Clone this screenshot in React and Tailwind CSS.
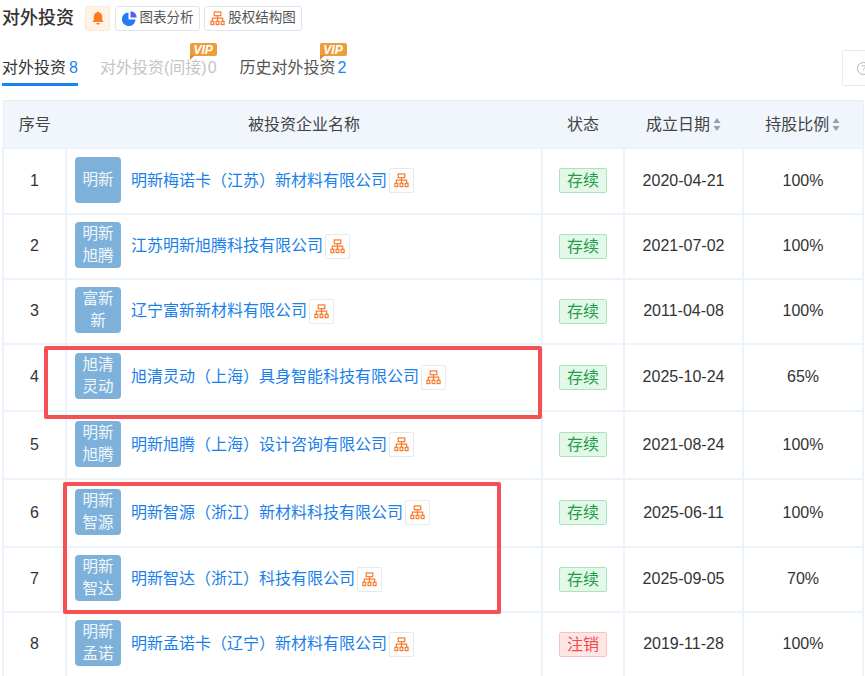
import React from 'react'

const rows = [
  { id: 1, logo: ['明新'], name: '明新梅诺卡（江苏）新材料有限公司', status: '存续', date: '2020-04-21', ratio: '100%', h: 'h-[66px]' },
  { id: 2, logo: ['明新', '旭腾'], name: '江苏明新旭腾科技有限公司', status: '存续', date: '2021-07-02', ratio: '100%', h: 'h-[65px]' },
  { id: 3, logo: ['富新', '新'], name: '辽宁富新新材料有限公司', status: '存续', date: '2011-04-08', ratio: '100%', h: 'h-[65px]' },
  { id: 4, logo: ['旭清', '灵动'], name: '旭清灵动（上海）具身智能科技有限公司', status: '存续', date: '2025-10-24', ratio: '65%', h: 'h-[67px]' },
  { id: 5, logo: ['明新', '旭腾'], name: '明新旭腾（上海）设计咨询有限公司', status: '存续', date: '2021-08-24', ratio: '100%', h: 'h-[68px]' },
  { id: 6, logo: ['明新', '智源'], name: '明新智源（浙江）新材料科技有限公司', status: '存续', date: '2025-06-11', ratio: '100%', h: 'h-[68px]' },
  { id: 7, logo: ['明新', '智达'], name: '明新智达（浙江）科技有限公司', status: '存续', date: '2025-09-05', ratio: '70%', h: 'h-[65px]' },
  { id: 8, logo: ['明新', '孟诺'], name: '明新孟诺卡（辽宁）新材料有限公司', status: '注销', date: '2019-11-28', ratio: '100%', h: 'h-[65px]' },
]

function TreeIcon({ className }) {
  return (
    <svg className={className} viewBox="0 0 16 16" fill="none" stroke="#f97b2f" strokeWidth="1.3">
      <rect x="4.500" y="1" width="7" height="4" />
      <path d="M8 5v2.500M2.500 11V7.500h11V11M8 7.500V11" />
      <rect x="1" y="11" width="3" height="3.500" />
      <rect x="6.500" y="11" width="3" height="3.500" />
      <rect x="12" y="11" width="3" height="3.500" />
    </svg>
  )
}

function SortIcon() {
  return (
    <svg className="ml-[3px] inline-block h-[13px] w-[8px] align-[-1px]" viewBox="0 0 8 13" fill="#9aa0a8">
      <path d="M4 0l3.500 5h-7zM4 13L.5 8h7z" />
    </svg>
  )
}

function VipTag({ className }) {
  return (
    <span className={`absolute flex h-[13px] w-[27px] items-center justify-center rounded-[2px] bg-[#ee9d3c] text-[12px] font-bold italic leading-none text-white ${className}`}>
      VIP
      <span className="absolute bottom-[-4px] left-0 h-0 w-0 border-r-[5px] border-t-[5px] border-r-transparent border-t-[#dd8a2a]"></span>
    </span>
  )
}

function App() {
  return (
    <div
      className="relative h-[676px] w-[865px] overflow-hidden bg-white text-[#333]"
      style={{ fontFamily: '"Liberation Sans", "Noto Sans CJK SC", sans-serif' }}
    >
      <div className="flex h-[36px] items-center pl-[2px]">
        <span className="text-[18px] font-medium leading-none">对外投资</span>
        <span className="ml-[11px] flex h-[25px] w-[25px] items-center justify-center rounded-[3px] border border-[#fde6d2] bg-[#fff3e8]">
          <svg className="h-[14px] w-[14px]" viewBox="0 0 14 14" fill="#ff7a1a">
            <path d="M7 0.500c.7 0 1.100.4 1.200 1C10.200 2 11.200 3.700 11.200 6v3l1.300 2H1.500l1.300-2V6c0-2.300 1-4 3-4.500.1-.6.5-1 1.200-1zM5.200 12h3.600c-.2 1-.9 1.500-1.800 1.500S5.400 13 5.200 12z" />
          </svg>
        </span>
        <span className="ml-[5px] flex h-[25px] w-[85px] items-center justify-center rounded-[3px] border border-[#dfe5ee] text-[13.5px] text-[#555]">
          <svg className="mr-[3px] h-[15px] w-[15px]" viewBox="0 0 15 15" fill="#1f7cf5">
            <path d="M6.500 1.500v7h7a6.800 6.800 0 1 1-7-7z" />
            <path d="M8.500 0.300a6.800 6.800 0 0 1 6.200 6.200H8.500z" fill="#5b5ff0" />
          </svg>
          图表分析
        </span>
        <span className="ml-[4px] flex h-[25px] w-[98px] items-center justify-center rounded-[3px] border border-[#dfe5ee] text-[13.5px] text-[#555]">
          <TreeIcon className="mr-[3px] h-[15px] w-[15px]" />
          股权结构图
        </span>
      </div>

      <div className="relative flex h-[50px] items-start pl-[2px] pt-[19px] text-[16px] leading-[26px]">
        <div className="h-[31px] w-[76px] border-b-[3px] border-[#1784f5] whitespace-nowrap">
          对外投资<span className="ml-[3px] text-[#1784f5]">8</span>
        </div>
        <div className="relative ml-[22px] whitespace-nowrap text-[#c4c4c4]">
          对外投资(间接)<span className="ml-[1px]">0</span>
          <VipTag className="right-[0px] top-[-12px]" />
        </div>
        <div className="relative ml-[23px] whitespace-nowrap text-[#555]">
          历史对外投资<span className="ml-[2px] text-[#1784f5]">2</span>
          <VipTag className="right-[0px] top-[-12px]" />
        </div>
        <div className="absolute left-[842px] top-[14px] flex h-[36px] w-[40px] items-center rounded-[2px] border border-[#e6e9ee] pl-[14px]">
          <span className="flex h-[13px] w-[13px] items-center justify-center rounded-full border border-[#b5b5b5] text-[9px] text-[#b5b5b5]">?</span>
        </div>
      </div>

      <div className="pl-[2px] pt-[14px]">
        <table className="w-[860px] table-fixed border-collapse">
          <thead>
            <tr className="h-[47px] border border-[#e6eef8] bg-[#f1f6fd] text-[16px] font-normal text-[#444]">
              <th className="w-[63px] pt-[2px] font-normal">序号</th>
              <th className="w-[476px] pt-[2px] font-normal">被投资企业名称</th>
              <th className="w-[82px] pt-[2px] font-normal">状态</th>
              <th className="w-[119px] pt-[2px] font-normal">成立日期<SortIcon /></th>
              <th className="w-[120px] pt-[2px] font-normal">持股比例<SortIcon /></th>
            </tr>
          </thead>
          <tbody className="text-[16px] text-[#333]">
            {rows.map((row) => (
              <tr key={row.id} className={row.h}>
                <td className="border-2 border-[#edf3fa] text-center">{row.id}</td>
                <td className="border-2 border-[#edf3fa] pl-[8px]">
                  <div className="flex items-center">
                    <span className="flex h-[46px] w-[46px] -translate-y-px flex-col items-center justify-center rounded-[4px] bg-[#7eb1da] text-[15.5px] leading-[22px] text-white/90">
                      {row.logo.map((line) => (
                        <span key={line}>{line}</span>
                      ))}
                    </span>
                    <span className="ml-[10px] whitespace-nowrap text-[#1a7fe8]">{row.name}</span>
                    <span className="ml-[2px] flex h-[25px] w-[25px] items-center justify-center rounded-[2px] border border-[#e6e9ee]">
                      <TreeIcon className="h-[15px] w-[15px]" />
                    </span>
                  </div>
                </td>
                <td className="border-2 border-[#edf3fa] text-center">
                  {row.status === '存续' ? (
                    <span className="inline-block h-[25px] w-[48px] rounded-[2px] border border-[#a9e5bb] bg-[#e3f8e9] leading-[23px] text-[#1f9e46]">
                      {row.status}
                    </span>
                  ) : (
                    <span className="inline-block h-[25px] w-[48px] rounded-[2px] border border-[#fbc0c0] bg-[#ffe6e6] leading-[23px] text-[#f0494b]">
                      {row.status}
                    </span>
                  )}
                </td>
                <td className="border-2 border-[#edf3fa] text-center">{row.date}</td>
                <td className="border-2 border-[#edf3fa] text-center">{row.ratio}</td>
              </tr>
            ))}
          </tbody>
        </table>
      </div>

      {/* red highlight boxes drawn over the table */}
      <div className="absolute left-[44px] top-[346px] h-[73px] w-[498px] rounded-[2px] border-[4px] border-[#f55053]"></div>
      <div className="absolute left-[63px] top-[482px] h-[132px] w-[438px] rounded-[2px] border-[4px] border-[#f55053]"></div>
    </div>
  )
}

export default App
